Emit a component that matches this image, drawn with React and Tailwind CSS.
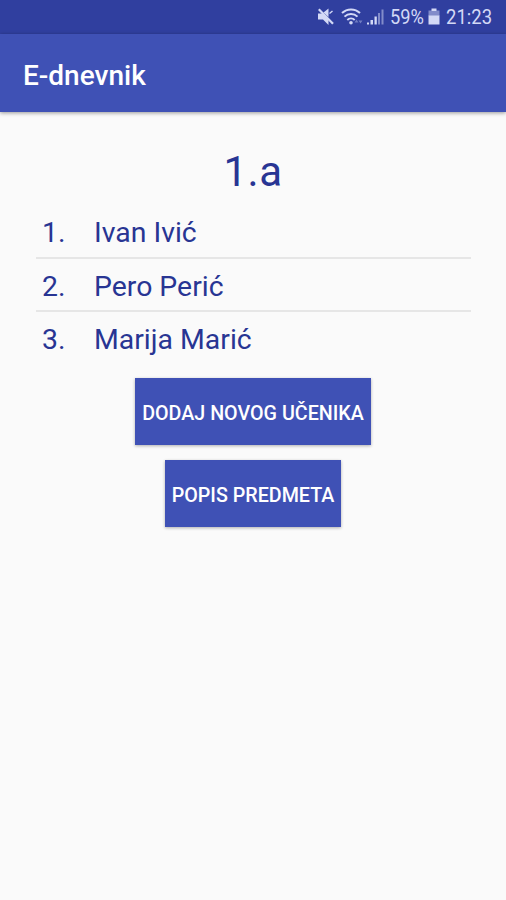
const students = ["Ivan Ivić", "Pero Perić", "Marija Marić"];

function StatusBar() {
  return (
    <div className="h-[34px] bg-[#303f9f] flex items-center text-[#d3d9f6] pl-[316px]">
      <svg className="w-[74px] h-[34px] shrink-0" viewBox="316 0 74 34" fill="currentColor">
        {/* muted speaker */}
        <path d="M318 13.500h5l5.500 5.500v6l-5.500-5.500h-5z" />
        <path d="M323.500 12.500L328.500 8.500v8.500z" />
        <path d="M318.800 9.300L333 23.800" stroke="currentColor" strokeWidth="2.200" />
        <path d="M329.500 13.500l3-2.500" stroke="currentColor" strokeWidth="1.400" />
        {/* wifi */}
        <g fill="none" stroke="currentColor" strokeWidth="2">
          <path d="M342 13a13 13 0 0 1 18 0" />
          <path d="M344.500 16.600a9.300 9.300 0 0 1 13 0" />
          <path d="M347.300 20a5.500 5.500 0 0 1 7.400 0" />
        </g>
        <circle cx="351" cy="22.800" r="1.800" />
        <path d="M354.500 22.500l2-3 2 3zM358.500 20.500h4l-2 3z" opacity="0.4" />
        {/* signal */}
        <path d="M367 22.500h2v2h-2zM370.500 20h2.500v4.500h-2.500zM374.500 16.500h2.300v8h-2.300z" />
        <path d="M378 13h2v11.500h-2zM381.500 9.500h2v15h-2z" opacity="0.5" />
      </svg>
      <span className="w-[38px] shrink-0 whitespace-nowrap text-[21px] leading-[34px] origin-left scale-x-[0.87]">
        59%
      </span>
      <svg className="w-[18px] h-[34px] shrink-0" viewBox="428 0 18 34" fill="currentColor">
        <path d="M431.500 8.500h5v2.500h-5z" />
        <path d="M428.500 10.500h11v5.500h-11z" opacity="0.5" />
        <path d="M428.500 15.500h11v9h-11z" />
      </svg>
      <span className="whitespace-nowrap text-[21px] leading-[34px] origin-left scale-x-[0.88]">
        21:23
      </span>
    </div>
  );
}

function Button({ children, className }) {
  return (
    <button
      className={`h-[67px] pt-[5px] bg-[#3f51b5] text-white text-[19.7px] font-medium whitespace-nowrap shadow-[0_1px_3px_rgba(0,0,0,0.3)] ${className}`}
    >
      {children}
    </button>
  );
}

function App() {
  return (
    <div className="h-[900px] w-[506px] overflow-hidden bg-[#fafafa] font-['Roboto',sans-serif]">
      <StatusBar />

      {/* App bar */}
      <header className="h-[78px] bg-[#3f51b5] flex items-center pl-[23px] pt-1.5 shadow-[0_1px_4px_rgba(0,0,0,0.4)]">
        <h1 className="text-[28px] font-medium text-white">E-dnevnik</h1>
      </header>

      <main className="flex flex-col items-center pt-[35px] text-[#283593]">
        <h2 className="text-[42px] leading-[50px] tracking-[0.5px]">1.a</h2>

        {/* Students */}
        <ol className="w-[436px] mt-[8px] pl-px">
          {students.map((name, i) => (
            <li
              key={name}
              className="h-[53.500px] pt-[6px] flex items-center border-b-2 border-[#e6e6e6] last:border-b-0 last:pt-[4px] text-[28.4px]"
            >
              <span className="w-[58px] pl-[6px]">{i + 1}.</span>
              <span>{name}</span>
            </li>
          ))}
        </ol>

        <Button className="mt-[12.5px] w-[236px]">DODAJ NOVOG UČENIKA</Button>
        <Button className="mt-[15px] w-[176px]">POPIS PREDMETA</Button>
      </main>
    </div>
  );
}

export default App;
